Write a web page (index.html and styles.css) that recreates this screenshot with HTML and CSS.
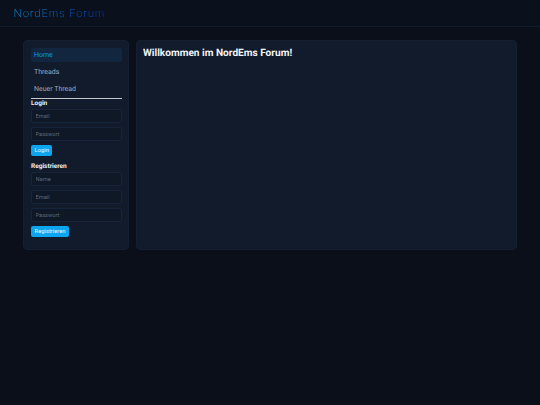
FILE: index.html
```html
<!DOCTYPE html>
<html lang="de">
<head>
  <meta charset="UTF-8">
  <title>NordEms Forum</title>
  <link rel="stylesheet" href="styles.css">
</head>
<body>
  <header class="topbar">
    <span class="logo">NordEms Forum</span>
  </header>

  <div class="layout">
    <aside class="sidebar">
      <nav class="nav">
        <a class="nav-item active" href="#">Home</a>
        <a class="nav-item" href="#">Threads</a>
        <a class="nav-item" href="#">Neuer Thread</a>
      </nav>
      <hr class="divider">

      <!-- Login -->
      <h3 class="form-title">Login</h3>
      <form class="form login-form">
        <input type="text" placeholder="Email">
        <input type="password" placeholder="Passwort">
        <button type="button">Login</button>
      </form>

      <!-- Registrieren -->
      <h3 class="form-title register-title">Registrieren</h3>
      <form class="form">
        <input type="text" placeholder="Name">
        <input type="text" placeholder="Email">
        <input type="password" placeholder="Passwort">
        <button type="button">Registrieren</button>
      </form>
    </aside>

    <main class="content">
      <h2>Willkommen im NordEms Forum!</h2>
    </main>
  </div>
</body>
</html>
```

FILE: styles.css
```css
* { box-sizing: border-box; }
body {
  margin: 0;
  min-height: 405px;
  background-color: #0a0f1a;
  color: #e6edf5;
  font-family: Roboto, "Liberation Sans", sans-serif;
  font-size: 7px;
  text-rendering: geometricPrecision;
}
.topbar {
  height: 27px;
  padding: 0 13.5px;
  display: flex;
  align-items: center;
  background-color: #0a101c;
  border-bottom: 1px solid #101b2b;
}
.logo {
  font-family: Inter, sans-serif;
  font-size: 11px;
  font-weight: 200;
  letter-spacing: 0.75px;
  background: linear-gradient(90deg, #0a9cf0, #0a3cd0);
  -webkit-background-clip: text;
  background-clip: text;
  color: transparent;
}
.layout {
  display: flex;
  gap: 7px;
  margin: 13px 23px 0;
  height: 210px;
}
.sidebar, .content {
  background-color: #121b2b;
  border: 1px solid #141f32;
  border-radius: 4px;
}
.sidebar {
  width: 106px;
  padding: 7px 6.5px 7px 7px;
}
.content {
  flex: 1;
  padding: 6px 6px;
}
.content h2 {
  margin: 0;
  font-size: 10.1px;
  font-weight: 700;
  line-height: 14px;
  color: #f2f5f9;
}
.nav {
  display: flex;
  flex-direction: column;
  gap: 3px;
}
.nav-item {
  height: 14px;
  padding: 0 3px;
  display: flex;
  align-items: center;
  border-radius: 2px;
  color: #9aa8b8;
  text-decoration: none;
}
.nav-item.active {
  background-color: #12263f;
  color: #0a9be8;
}
.divider {
  margin: 2px 0 0;
  border: 0;
  height: 1px;
  background-color: #c4c8cd;
}
.form-title {
  margin: 0;
  font-size: 6.5px;
  font-weight: 700;
  line-height: 8px;
  color: #eef1f5;
}
.register-title {
  margin-top: 6.5px;
}
.form {
  margin-top: 2px;
  display: flex;
  flex-direction: column;
  align-items: flex-start;
  gap: 4.5px;
}
input {
  width: 100%;
  height: 13.5px;
  padding: 0 3.5px;
  background-color: #0f1826;
  border: 1px solid #16253b;
  border-radius: 2px;
  color: #e6edf5;
  font-family: inherit;
  font-size: 5.7px;
}
input::placeholder { color: #5e6a78; }
button {
  height: 10.5px;
  padding: 0 3.6px;
  background-color: #0ea5f0;
  border: none;
  border-radius: 2px;
  color: #eaf6ff;
  font-family: inherit;
  font-size: 5.8px;
}
```
